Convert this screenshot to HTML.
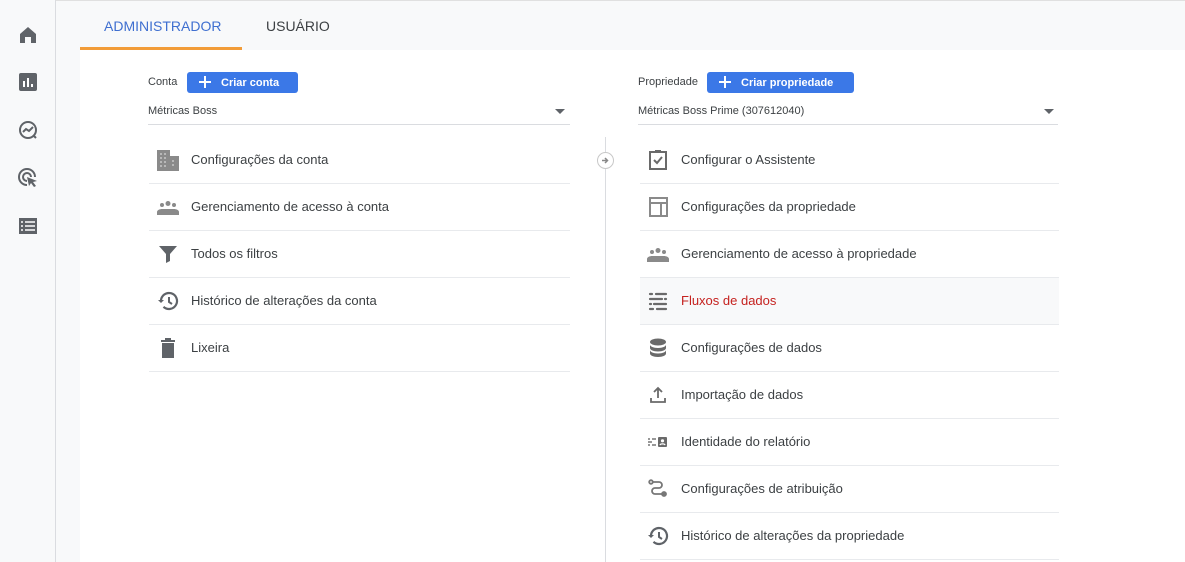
<!DOCTYPE html>
<html><head><meta charset="utf-8"><style>
*{margin:0;padding:0;box-sizing:border-box}
body{width:1185px;height:562px;overflow:hidden;background:#fff;font-family:"Liberation Sans",Arial,sans-serif;position:relative;color:#3c4043}
.a{position:absolute}
.side{left:0;top:0;width:56px;height:562px;background:#f8f9fa;border-right:1px solid #dadce0}
.top{left:56px;top:0;width:1129px;height:50px;background:#f8f9fa;border-top:1px solid #e0e0e0}
.gap{left:56px;top:1px;width:24px;height:561px;background:#f8f9fa}
.tab{top:18px;font-size:14px}
.btn{height:21px;background:#3b78e7;border-radius:3px;color:#fff;font-size:11px;font-weight:bold;line-height:22px;padding-left:34px}
.btn:before{content:"";position:absolute;left:12px;top:4px;width:12px;height:12px;background:linear-gradient(#fff,#fff) center/12px 2px no-repeat,linear-gradient(#fff,#fff) center/2px 12px no-repeat}
.lbl{font-size:11px;color:#3c4043}
.sep{height:1px;background:#e8eaed}
.row{font-size:13px;line-height:16px}
.ic{width:24px;height:24px}
</style></head><body>
<div class="a side"></div>
<div class="a top"></div>
<div class="a gap"></div>
<svg class="a" style="left:16px;top:23px" width="24" height="24" viewBox="0 0 24 24"><path d="M12 4l-8 7v9h5v-6h6v6h5v-9z" fill="#5f6368"/></svg>
<svg class="a" style="left:16px;top:70px" width="24" height="24" viewBox="0 0 24 24"><rect x="3" y="3" width="18" height="18" rx="2" fill="#5f6368"/><path d="M8 17v-6M12 17V8M16 17v-3" stroke="#fff" stroke-width="2"/></svg>
<svg class="a" style="left:16px;top:118px" width="24" height="24" viewBox="0 0 24 24"><circle cx="12" cy="12" r="8" fill="none" stroke="#5f6368" stroke-width="2"/><path d="M7 14l3-3 3 2 4-4" fill="none" stroke="#5f6368" stroke-width="2"/><path d="M17 17l3 3" stroke="#5f6368" stroke-width="2"/></svg>
<svg class="a" style="left:16px;top:166px" width="24" height="24" viewBox="0 0 24 24"><path d="M19 11a8 8 0 1 0-8 8" fill="none" stroke="#5f6368" stroke-width="2"/><path d="M15 11a4 4 0 1 0-4 4" fill="none" stroke="#5f6368" stroke-width="2"/><path d="M11 11l10 4-4 1 3 4-2 1-3-4-2 3z" fill="#5f6368"/></svg>
<svg class="a" style="left:16px;top:214px" width="24" height="24" viewBox="0 0 24 24"><rect x="3" y="4" width="18" height="16" fill="#5f6368"/><path d="M5 8h2M9 8h10M5 12h2M9 12h10M5 16h2M9 16h10" stroke="#fff" stroke-width="1.6"/></svg>

<div class="a tab" style="left:104px;color:#3f6fd0">ADMINISTRADOR</div>
<div class="a" style="left:80px;top:47px;width:162px;height:3px;background:#f29c38"></div>
<div class="a tab" style="left:266px;color:#3c4043">USUÁRIO</div>

<div class="a lbl" style="left:148px;top:76px">Conta</div>
<div class="a btn" style="left:187px;top:72px;width:111px">Criar conta</div>
<div class="a lbl" style="left:148px;top:105px">Métricas Boss</div>
<div class="a" style="left:555px;top:109px;border:5px solid transparent;border-top-color:#5f6368"></div>
<div class="a" style="left:148px;top:124px;width:422px;height:1px;background:#dadce0"></div>

<div class="a lbl" style="left:638px;top:76px">Propriedade</div>
<div class="a btn" style="left:707px;top:72px;width:147px">Criar propriedade</div>
<div class="a lbl" style="left:638px;top:105px">Métricas Boss Prime (307612040)</div>
<div class="a" style="left:1044px;top:109px;border:5px solid transparent;border-top-color:#5f6368"></div>
<div class="a" style="left:638px;top:124px;width:420px;height:1px;background:#dadce0"></div>

<div class="a" style="left:605px;top:137px;width:1px;height:425px;background:#dadce0"></div>
<div class="a" style="left:597px;top:152px;width:17px;height:17px;border-radius:50%;border:1px solid #c8c8c8;background:#fff"></div>
<svg class="a" style="left:600px;top:155px" width="11" height="11" viewBox="0 0 11 11"><path d="M2 5.5h5M5 3l2.5 2.5L5 8" stroke="#888" stroke-width="1.5" fill="none"/></svg>

<div class="a" style="left:640px;top:278px;width:419px;height:46px;background:#f8f9fa"></div>

<div class="a row" style="left:191px;top:152px">Configurações da conta</div>
<div class="a row" style="left:191px;top:199px">Gerenciamento de acesso à conta</div>
<div class="a row" style="left:191px;top:246px">Todos os filtros</div>
<div class="a row" style="left:191px;top:293px">Histórico de alterações da conta</div>
<div class="a row" style="left:191px;top:340px">Lixeira</div>
<div class="a sep" style="left:149px;top:183px;width:421px"></div>
<div class="a sep" style="left:149px;top:230px;width:421px"></div>
<div class="a sep" style="left:149px;top:277px;width:421px"></div>
<div class="a sep" style="left:149px;top:324px;width:421px"></div>
<div class="a sep" style="left:149px;top:371px;width:421px"></div>

<svg class="a ic" style="left:156px;top:148px" viewBox="0 0 24 24"><path d="M1 2h13v6h9v15H1z" fill="#8a8a8a"/><path d="M4 6h2M8 6h2M4 10h2M8 10h2M4 14h2M8 14h2M4 18h2M8 18h2M16 13h2M16 17h2" stroke="#c8c8c8" stroke-width="1.5"/></svg>
<svg class="a ic" style="left:156px;top:195px" viewBox="0 0 24 24" fill="#8a8a8a"><circle cx="6" cy="10" r="2"/><circle cx="12" cy="8.5" r="2.5"/><circle cx="18" cy="10" r="2"/><path d="M1 20v-3c0-2 3-3 5-3h12c2 0 5 1 5 3v3z"/></svg>
<svg class="a ic" style="left:156px;top:242px" viewBox="0 0 24 24"><path d="M3 4h18l-7 8v7l-4 2v-9z" fill="#5f6368"/></svg>
<svg class="a ic" style="left:156px;top:289px" viewBox="0 0 24 24"><path d="M5 12a8 8 0 1 1 2.5 5.8" fill="none" stroke="#5f6368" stroke-width="2.2"/><path d="M2 11h6l-3 3z" fill="#5f6368"/><path d="M13 8v5l3 2" fill="none" stroke="#5f6368" stroke-width="2"/></svg>
<svg class="a ic" style="left:156px;top:336px" viewBox="0 0 24 24" fill="#5f6368"><path d="M5 4h14v2H5zM9 2h6v2H9zM6 7h12v15H6z"/></svg>

<div class="a row" style="left:681px;top:152px">Configurar o Assistente</div>
<div class="a row" style="left:681px;top:199px">Configurações da propriedade</div>
<div class="a row" style="left:681px;top:246px">Gerenciamento de acesso à propriedade</div>
<div class="a row" style="left:681px;top:293px;color:#c5221f">Fluxos de dados</div>
<div class="a row" style="left:681px;top:340px">Configurações de dados</div>
<div class="a row" style="left:681px;top:387px">Importação de dados</div>
<div class="a row" style="left:681px;top:434px">Identidade do relatório</div>
<div class="a row" style="left:681px;top:481px">Configurações de atribuição</div>
<div class="a row" style="left:681px;top:528px">Histórico de alterações da propriedade</div>
<div class="a sep" style="left:640px;top:183px;width:419px"></div>
<div class="a sep" style="left:640px;top:230px;width:419px"></div>
<div class="a sep" style="left:640px;top:277px;width:419px"></div>
<div class="a sep" style="left:640px;top:324px;width:419px"></div>
<div class="a sep" style="left:640px;top:371px;width:419px"></div>
<div class="a sep" style="left:640px;top:418px;width:419px"></div>
<div class="a sep" style="left:640px;top:465px;width:419px"></div>
<div class="a sep" style="left:640px;top:512px;width:419px"></div>
<div class="a sep" style="left:640px;top:559px;width:419px"></div>

<svg class="a ic" style="left:646px;top:148px" viewBox="0 0 24 24"><rect x="4" y="4" width="16" height="17" fill="none" stroke="#6a6a6a" stroke-width="2"/><rect x="9" y="2" width="6" height="3" fill="#6a6a6a"/><path d="M8 12l3 3 5-6" fill="none" stroke="#6a6a6a" stroke-width="2"/></svg>
<svg class="a ic" style="left:646px;top:195px" viewBox="0 0 24 24"><rect x="4" y="3" width="17" height="18" fill="none" stroke="#8a8a8a" stroke-width="2"/><path d="M4 8h17M15 8v13" stroke="#8a8a8a" stroke-width="2"/></svg>
<svg class="a ic" style="left:646px;top:242px" viewBox="0 0 24 24" fill="#8a8a8a"><circle cx="6" cy="10" r="2"/><circle cx="12" cy="8.5" r="2.5"/><circle cx="18" cy="10" r="2"/><path d="M1 20v-3c0-2 3-3 5-3h12c2 0 5 1 5 3v3z"/></svg>
<svg class="a ic" style="left:646px;top:289px" viewBox="0 0 24 24" stroke="#6a6a6a" stroke-width="2.2" stroke-linecap="round"><path d="M4 5h2M10 5h10M4 10h12M19 10h1M4 15h1M8 15h12M4 20h3M11 20h9"/></svg>
<svg class="a ic" style="left:646px;top:336px" viewBox="0 0 24 24" fill="#6a6a6a"><ellipse cx="12" cy="6" rx="8" ry="3.5"/><path d="M4 8.5c0 2 3.5 3.5 8 3.5s8-1.5 8-3.5V12c0 2-3.5 3.5-8 3.5S4 14 4 12zM4 14c0 2 3.5 3.5 8 3.5s8-1.5 8-3.5v3.5c0 2-3.5 3.5-8 3.5s-8-1.5-8-3.5z"/></svg>
<svg class="a ic" style="left:646px;top:383px" viewBox="0 0 24 24" fill="none" stroke="#6a6a6a" stroke-width="1.8"><path d="M12 15V5M8 9l4-4 4 4M5 15v4h14v-4"/></svg>
<svg class="a ic" style="left:646px;top:430px" viewBox="0 0 24 24"><path d="M2 9h2M6 9h4M2 12h4M2 15h2M6 15h4" stroke="#777" stroke-width="1.6"/><rect x="12" y="7" width="9" height="10" rx="1" fill="#6a6a6a"/><circle cx="16.5" cy="10.8" r="1.6" fill="#fff"/><path d="M14 15c.5-1.5 4.5-1.5 5 0" stroke="#fff" stroke-width="1.3" fill="none"/></svg>
<svg class="a ic" style="left:646px;top:477px" viewBox="0 0 24 24" fill="none" stroke="#777" stroke-width="1.8"><circle cx="5" cy="5" r="1.8"/><path d="M7 5h6a3 3 0 0 1 0 6H9a3 3 0 0 0 0 6h7"/><circle cx="18" cy="17" r="2" fill="#777"/></svg>
<svg class="a ic" style="left:646px;top:524px" viewBox="0 0 24 24"><path d="M5 12a8 8 0 1 1 2.5 5.8" fill="none" stroke="#5f6368" stroke-width="2.2"/><path d="M2 11h6l-3 3z" fill="#5f6368"/><path d="M13 8v5l3 2" fill="none" stroke="#5f6368" stroke-width="2"/></svg>
</body></html>
